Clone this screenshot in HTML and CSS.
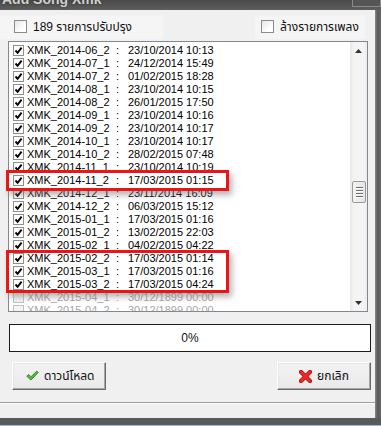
FILE: index.html
```html
<!DOCTYPE html>
<html>
<head>
<meta charset="utf-8">
<link rel="stylesheet" href="styles.css">
</head>
<body>
<div class="window">
  <div class="titlebar">
    <span class="title">Add Song Xmk</span>
    <span class="closebtn"></span>
  </div>
  <div class="body">
    <div class="client">
      <div class="options">
        <label class="opt opt-left"><span class="cb"></span><span class="opt-text">189 รายการปรับปรุง</span></label>
        <label class="opt opt-right"><span class="cb"></span><span class="opt-text">ล้างรายการเพลง</span></label>
      </div>
      <div class="listbox">
        <div class="rows">
          <div class="row"><span class="lcb"><svg viewBox="0 0 9 9"><path d="M1.5 4.5 L3.6 6.8 L7.6 1.6"/></svg></span><span class="name">XMK_2014-06_2</span><span class="sep">:</span><span class="date">23/10/2014 10:13</span></div>
          <div class="row"><span class="lcb"><svg viewBox="0 0 9 9"><path d="M1.5 4.5 L3.6 6.8 L7.6 1.6"/></svg></span><span class="name">XMK_2014-07_1</span><span class="sep">:</span><span class="date">24/12/2014 15:49</span></div>
          <div class="row"><span class="lcb"><svg viewBox="0 0 9 9"><path d="M1.5 4.5 L3.6 6.8 L7.6 1.6"/></svg></span><span class="name">XMK_2014-07_2</span><span class="sep">:</span><span class="date">01/02/2015 18:28</span></div>
          <div class="row"><span class="lcb"><svg viewBox="0 0 9 9"><path d="M1.5 4.5 L3.6 6.8 L7.6 1.6"/></svg></span><span class="name">XMK_2014-08_1</span><span class="sep">:</span><span class="date">23/10/2014 10:15</span></div>
          <div class="row"><span class="lcb"><svg viewBox="0 0 9 9"><path d="M1.5 4.5 L3.6 6.8 L7.6 1.6"/></svg></span><span class="name">XMK_2014-08_2</span><span class="sep">:</span><span class="date">26/01/2015 17:50</span></div>
          <div class="row"><span class="lcb"><svg viewBox="0 0 9 9"><path d="M1.5 4.5 L3.6 6.8 L7.6 1.6"/></svg></span><span class="name">XMK_2014-09_1</span><span class="sep">:</span><span class="date">23/10/2014 10:16</span></div>
          <div class="row"><span class="lcb"><svg viewBox="0 0 9 9"><path d="M1.5 4.5 L3.6 6.8 L7.6 1.6"/></svg></span><span class="name">XMK_2014-09_2</span><span class="sep">:</span><span class="date">23/10/2014 10:17</span></div>
          <div class="row"><span class="lcb"><svg viewBox="0 0 9 9"><path d="M1.5 4.5 L3.6 6.8 L7.6 1.6"/></svg></span><span class="name">XMK_2014-10_1</span><span class="sep">:</span><span class="date">23/10/2014 10:17</span></div>
          <div class="row"><span class="lcb"><svg viewBox="0 0 9 9"><path d="M1.5 4.5 L3.6 6.8 L7.6 1.6"/></svg></span><span class="name">XMK_2014-10_2</span><span class="sep">:</span><span class="date">28/02/2015 07:48</span></div>
          <div class="row"><span class="lcb"><svg viewBox="0 0 9 9"><path d="M1.5 4.5 L3.6 6.8 L7.6 1.6"/></svg></span><span class="name">XMK_2014-11_1</span><span class="sep">:</span><span class="date">23/10/2014 10:19</span></div>
          <div class="row"><span class="lcb"><svg viewBox="0 0 9 9"><path d="M1.5 4.5 L3.6 6.8 L7.6 1.6"/></svg></span><span class="name">XMK_2014-11_2</span><span class="sep">:</span><span class="date">17/03/2015 01:15</span></div>
          <div class="row"><span class="lcb"><svg viewBox="0 0 9 9"><path d="M1.5 4.5 L3.6 6.8 L7.6 1.6"/></svg></span><span class="name">XMK_2014-12_1</span><span class="sep">:</span><span class="date">23/11/2014 16:09</span></div>
          <div class="row"><span class="lcb"><svg viewBox="0 0 9 9"><path d="M1.5 4.5 L3.6 6.8 L7.6 1.6"/></svg></span><span class="name">XMK_2014-12_2</span><span class="sep">:</span><span class="date">06/03/2015 15:12</span></div>
          <div class="row"><span class="lcb"><svg viewBox="0 0 9 9"><path d="M1.5 4.5 L3.6 6.8 L7.6 1.6"/></svg></span><span class="name">XMK_2015-01_1</span><span class="sep">:</span><span class="date">17/03/2015 01:16</span></div>
          <div class="row"><span class="lcb"><svg viewBox="0 0 9 9"><path d="M1.5 4.5 L3.6 6.8 L7.6 1.6"/></svg></span><span class="name">XMK_2015-01_2</span><span class="sep">:</span><span class="date">13/02/2015 22:03</span></div>
          <div class="row"><span class="lcb"><svg viewBox="0 0 9 9"><path d="M1.5 4.5 L3.6 6.8 L7.6 1.6"/></svg></span><span class="name">XMK_2015-02_1</span><span class="sep">:</span><span class="date">04/02/2015 04:22</span></div>
          <div class="row"><span class="lcb"><svg viewBox="0 0 9 9"><path d="M1.5 4.5 L3.6 6.8 L7.6 1.6"/></svg></span><span class="name">XMK_2015-02_2</span><span class="sep">:</span><span class="date">17/03/2015 01:14</span></div>
          <div class="row"><span class="lcb"><svg viewBox="0 0 9 9"><path d="M1.5 4.5 L3.6 6.8 L7.6 1.6"/></svg></span><span class="name">XMK_2015-03_1</span><span class="sep">:</span><span class="date">17/03/2015 01:16</span></div>
          <div class="row"><span class="lcb"><svg viewBox="0 0 9 9"><path d="M1.5 4.5 L3.6 6.8 L7.6 1.6"/></svg></span><span class="name">XMK_2015-03_2</span><span class="sep">:</span><span class="date">17/03/2015 04:24</span></div>
          <div class="row disabled"><span class="lcb"></span><span class="name">XMK_2015-04_1</span><span class="sep">:</span><span class="date">30/12/1899 00:00</span></div>
          <div class="row disabled"><span class="lcb"></span><span class="name">XMK_2015-04_2</span><span class="sep">:</span><span class="date">30/12/1899 00:00</span></div>
        </div>
        <div class="scrollbar">
          <div class="sb-btn"><svg viewBox="0 0 7 4"><path d="M0 4 L3.5 0 L7 4 Z"/></svg></div>
          <div class="sb-track">
            <div class="sb-thumb"><span></span><span></span><span></span><span></span></div>
          </div>
          <div class="sb-btn"><svg viewBox="0 0 7 4"><path d="M0 0 L7 0 L3.5 4 Z"/></svg></div>
        </div>
      </div>
      <div class="progress">0%</div>
      <div class="buttons">
        <button class="btn">
          <svg class="ico" viewBox="0 0 14 12"><path d="M0.8 6.2 L3 4.4 L5.4 6.8 L11.6 0.6 L13.2 2.3 L5.4 10.4 Z" fill="#56b83c" stroke="#2f7d22" stroke-width="0.9" stroke-linejoin="round"/></svg>
          <span>ดาวน์โหลด</span>
        </button>
        <button class="btn">
          <svg class="ico" viewBox="0 0 13 13"><path d="M2 2 L11 11 M11 2 L2 11" stroke="#a81010" stroke-width="4.2" stroke-linecap="round"/><path d="M2 2 L11 11 M11 2 L2 11" stroke="#ec2a24" stroke-width="2.6" stroke-linecap="round"/></svg>
          <span>ยกเลิก</span>
        </button>
      </div>
      <div class="statusbar"></div>
    </div>
    <div class="frame-right"></div>
  </div>
  <div class="frame-bottom"></div>
  <div class="mark mark1"></div>
  <div class="mark mark2"></div>
</div>
</body>
</html>
```

FILE: styles.css
```css
html, body {
  margin: 0;
  padding: 0;
}
body {
  width: 381px;
  height: 426px;
  overflow: hidden;
  background: #5c5c5c;
  font-family: Tahoma, "Liberation Sans", "Noto Sans Thai", "Noto Sans", sans-serif;
}
.window {
  position: relative;
  width: 381px;
  height: 426px;
  display: flex;
  flex-direction: column;
}
.titlebar {
  position: relative;
  height: 10px;
  overflow: hidden;
  background: linear-gradient(#4a4a4a, #5e5e5e);
  border-bottom: 0;
}
.title {
  display: block;
  margin-top: -9px;
  padding-left: 2px;
  font: bold 14px/16px "Liberation Sans", sans-serif;
  color: #cfcfcf;
  text-shadow: 0 0 3px #333;
}
.closebtn {
  position: absolute;
  right: 0;
  top: 0;
  width: 27px;
  height: 6px;
  border: 1px solid #8a8a8a;
  border-top: 0;
  background: #555;
}
.body {
  flex: 1;
  display: flex;
  min-height: 0;
}
.client {
  width: 375px;
  background: #f0f0f0;
  display: flex;
  flex-direction: column;
}
.frame-right {
  flex: 1;
  background: linear-gradient(to right, #8c8c8c, #5a5a5a 40%, #666);
}
.frame-bottom {
  height: 7px;
  background: #5a5a5a;
  border-bottom: 1px solid #9cb8d2;
}

/* options */
.options {
  height: 31px;
  display: flex;
  justify-content: space-between;
  align-items: center;
  box-sizing: border-box;
  padding-top: 2px;
}
.opt {
  display: flex;
  align-items: center;
  height: 24px;
  background: #f5f5f5;
  font-size: 12px;
  color: #111;
}
.opt-left {
  width: 149px;
  padding-left: 14px;
}
.opt-right {
  width: 104px;
  padding-left: 6px;
  margin-right: 10px;
}
.cb {
  width: 11px;
  height: 11px;
  border: 1px solid #8b8b8b;
  background: linear-gradient(135deg, #e6e6e6, #ffffff 70%);
  margin-right: 6px;
  flex: none;
}

/* listbox */
.listbox {
  position: relative;
  margin-left: 8px;
  width: 360px;
  height: 271px;
  box-sizing: border-box;
  border: 1px solid #828790;
  background: #fff;
  display: flex;
}
.rows {
  flex: 1;
  overflow: hidden;
  padding-top: 2px;
}
.row {
  height: 13px;
  display: flex;
  align-items: center;
  padding-left: 4px;
  font-size: 11px;
  line-height: 13px;
  color: #000;
  white-space: nowrap;
}
.lcb {
  width: 9px;
  height: 9px;
  border: 1px solid #8e8f8f;
  background: #fff;
  margin-right: 3px;
  flex: none;
  display: flex;
}
.lcb svg {
  width: 9px;
  height: 9px;
  fill: none;
  stroke: #000;
  stroke-width: 1.9;
}
.name {
  width: 89px;
  flex: none;
}
.sep {
  width: 12px;
  flex: none;
}
.row.disabled {
  color: #a5a5a5;
}
.row.disabled .lcb {
  border-color: #c2c2c2;
  background: #f4f4f4;
}

/* scrollbar */
.scrollbar {
  width: 17px;
  display: flex;
  flex-direction: column;
  background: linear-gradient(to right, #e6e6e6, #f4f4f4 20%, #f4f4f4 80%, #ececec);
}
.sb-btn {
  height: 17px;
  display: flex;
  align-items: center;
  justify-content: center;
}
.sb-btn svg {
  width: 7px;
  height: 4px;
  fill: #333;
}
.sb-track {
  flex: 1;
}
.sb-thumb {
  margin: 122px 1px 0 2px;
  height: 22px;
  box-sizing: border-box;
  border: 1px solid #9a9a9a;
  border-radius: 2px;
  background: linear-gradient(to right, #f4f4f4, #e4e4e4);
  display: flex;
  flex-direction: column;
  justify-content: center;
  align-items: center;
  gap: 2px;
}
.sb-thumb span {
  width: 7px;
  height: 1px;
  background: #6b6b6b;
  box-shadow: 0 1px 0 #fff;
}

/* progress */
.progress {
  margin-top: 12px;
  margin-left: 9px;
  width: 362px;
  height: 28px;
  box-sizing: border-box;
  border: 1px solid #1c1c1c;
  background: #fff;
  display: flex;
  align-items: center;
  justify-content: center;
  font-size: 12px;
  color: #111;
}

/* buttons */
.buttons {
  margin-top: 10px;
  display: flex;
  justify-content: space-between;
  padding: 0 4px 0 12px;
}
.btn {
  width: 94px;
  height: 28px;
  box-sizing: border-box;
  border: 1px solid;
  border-color: #fdfdfd #6a6a6a #6a6a6a #fdfdfd;
  box-shadow: inset -1px -1px 0 #a6a6a6, inset 1px 1px 0 #e8e8e8;
  background: linear-gradient(#f2f2f2, #e9e9e9);
  display: flex;
  align-items: center;
  justify-content: center;
  gap: 5px;
  padding: 0;
  font-family: Tahoma, "Liberation Sans", "Noto Sans Thai", sans-serif;
  font-size: 12px;
  color: #111;
}
.btn:first-child {
  justify-content: flex-start;
  padding-left: 13px;
}
.ico {
  width: 13px;
  height: 12px;
  flex: none;
}
.btn:last-child .ico {
  height: 13px;
}

.statusbar {
  flex: 1;
  margin-top: 12px;
  border-top: 1px solid #a0a0a0;
  box-shadow: inset 0 1px 0 #fff;
}

/* annotation marks */
.mark {
  position: absolute;
  left: 6px;
  width: 223px;
  box-sizing: border-box;
  border: 3px solid #ec1414;
  box-shadow: 3px 4px 6px rgba(120, 120, 120, 0.55);
}
.mark1 {
  top: 170px;
  height: 21px;
}
.mark2 {
  top: 250px;
  height: 43px;
}
```
